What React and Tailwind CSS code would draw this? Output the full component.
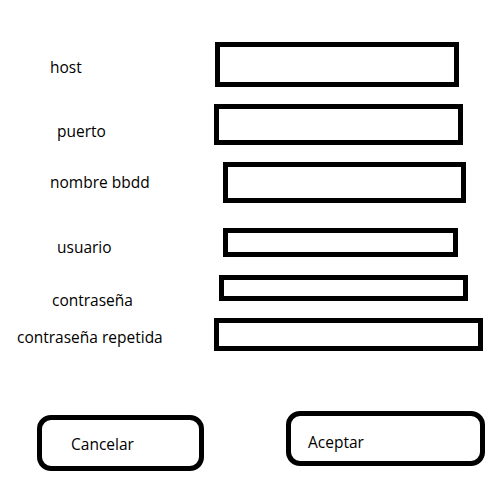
const fields = [
  { label: 'host', row: 'h-[62px]', lbl: 'pl-[50px] pt-[15px]', box: 'ml-[15px] w-[244px] h-[45px]' },
  { label: 'puerto', row: 'h-[58px]', lbl: 'pl-[57px] pt-[17px]', box: 'ml-[14px] w-[249px] h-[41px]' },
  { label: 'nombre bbdd', row: 'h-[66px]', lbl: 'pl-[50px] pt-[10px]', box: 'ml-[23px] w-[243px] h-[41px]' },
  { label: 'usuario', row: 'h-[47px]', lbl: 'pl-[57px] pt-[9px]', box: 'ml-[23px] w-[235px] h-[29px]' },
  { label: 'contraseña', row: 'h-[43px]', lbl: 'pl-[52px] pt-[15px]', box: 'ml-[19px] w-[249px] h-[26px]' },
  { label: 'contraseña repetida', row: 'h-[93px]', lbl: 'pl-[17px] pt-[9px]', box: 'ml-[14px] w-[269px] h-[33px]' },
];

export default function App() {
  return (
    <div className="w-[500px] h-[500px] bg-white text-black text-[15.5px] leading-[20px] pt-[42px] overflow-hidden" style={{ fontFamily: '"Open Sans", sans-serif' }}>
      {fields.map((f) => (
        <div key={f.label} className={`flex items-start ${f.row}`}>
          <div className={`w-[200px] flex-none whitespace-nowrap ${f.lbl}`}>{f.label}</div>
          <div className={`flex-none border-[5px] border-black ${f.box}`} />
        </div>
      ))}

      <div className="flex items-start">
        <button type="button" className="ml-[37px] mt-[4px] w-[167px] h-[56px] flex-none border-[5px] border-black rounded-[14px] bg-white text-left pl-[29px] pt-[14px] flex items-start">
          Cancelar
        </button>
        <button type="button" className="ml-[82px] w-[199px] h-[55px] flex-none border-[5px] border-black rounded-[14px] bg-white text-left pl-[17px] pt-[16px] flex items-start">
          Aceptar
        </button>
      </div>
    </div>
  );
}
